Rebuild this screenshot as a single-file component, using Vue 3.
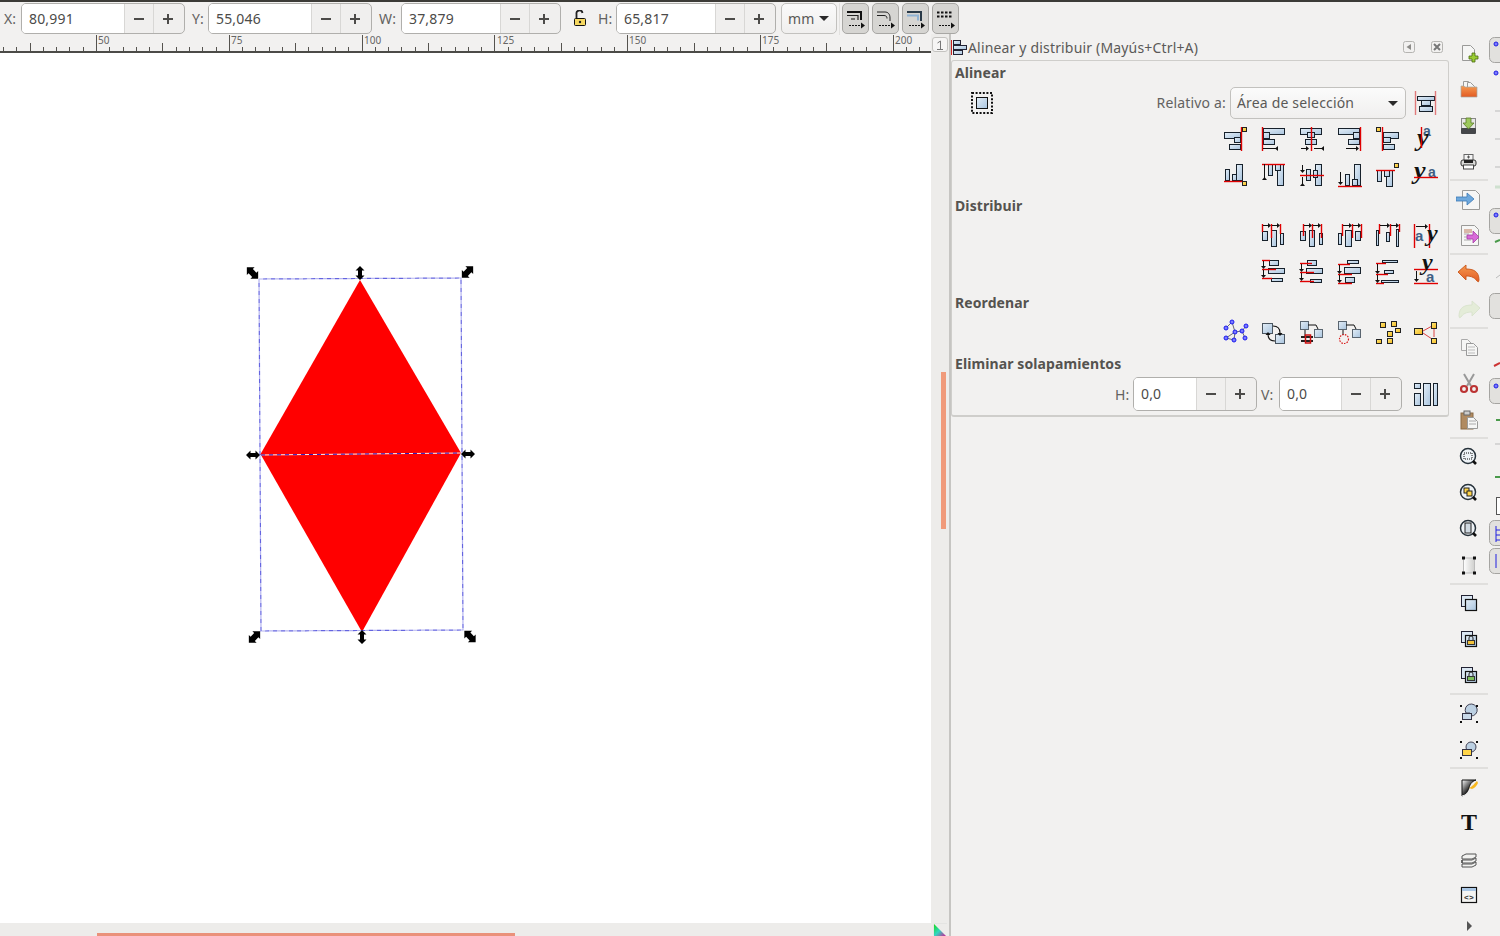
<script setup>
const B = (x, y, w, h) => `<rect x="${x + .5}" y="${y + .5}" width="${w - 1}" height="${h - 1}" fill="url(#gb)" stroke="#17212b"/>`
const V = (x, a, b, c = '#e00000') => `<path d="M${x + .5} ${a}V${b}" stroke="${c}" stroke-width="1.4" fill="none"/>`
const H = (y, a, b, c = '#e00000') => `<path d="M${a} ${y + .5}H${b}" stroke="${c}" stroke-width="1.4" fill="none"/>`
const Y = (x, y, w = 5, h = 5) => `<rect x="${x + .5}" y="${y + .5}" width="${w - 1}" height="${h - 1}" fill="url(#gy)" stroke="#222"/>`
const AR = (a, b, y) => `<path d="M${a} ${y + .5}H${b}" stroke="#111"/><path d="M${b + 1} ${y + .5}l-3 -2.5v5z" fill="#111"/>`
const AL = (a, b, y) => `<path d="M${a} ${y + .5}H${b}" stroke="#111"/><path d="M${b - 1} ${y + .5}l3 -2.5v5z" fill="#111"/>`
const AD = (x, a, b) => `<path d="M${x + .5} ${a}V${b}" stroke="#111"/><path d="M${x + .5} ${b + 1}l-2.5 -3h5z" fill="#111"/>`
const AU = (x, a, b) => `<path d="M${x + .5} ${a}V${b}" stroke="#111"/><path d="M${x + .5} ${b - 1}l-2.5 3h5z" fill="#111"/>`
const A = (x, y, s = 14) => `<text x="${x}" y="${y}" font-family="Liberation Sans" font-weight="700" font-size="${s}" fill="#3f5f85">a</text>`
const W = (x, y, s = 26) => `<text x="${x}" y="${y}" font-family="Liberation Serif" font-weight="700" font-style="italic" font-size="${s}" fill="#111">y</text>`

const alignTop = [
  B(0, 5, 17, 7) + B(10, 10, 7, 6) + B(5, 17, 12, 6) + V(17, 0, 24) + Y(18, 0),
  B(1, 1, 22, 7) + B(1, 5, 7, 7) + B(1, 12, 12, 6) + V(0, 0, 24) + AL(1, 14, 21),
  B(0, 1, 22, 7) + B(7, 5, 8, 6) + B(5, 12, 12, 6) + V(11, 0, 24) + AR(1, 8, 21) + AL(14, 22, 21),
  B(0, 1, 22, 7) + B(15, 5, 7, 7) + B(10, 12, 12, 6) + V(22, 0, 24) + AR(8, 20, 21),
  B(7, 5, 16, 7) + B(7, 10, 8, 6) + B(7, 17, 12, 6) + V(6, 0, 24) + Y(0, 0),
  A(9, 9) + W(3, 19) + V(7, 0, 21),
]
const alignBottom = [
  B(1, 6, 5, 12) + B(8, 11, 6, 7) + B(12, 1, 7, 17) + H(18, 0, 19) + Y(18, 18),
  B(6, 1, 5, 12) + B(15, 1, 7, 22) + B(13, 1, 6, 7) + H(1, 0, 23) + AU(2, 1, 15),
  B(6, 6, 5, 12) + B(15, 1, 7, 22) + B(13, 7, 5, 8) + H(12, 0, 24) + AD(2, 2, 9) + AU(2, 14, 21),
  B(7, 11, 5, 12) + B(16, 1, 7, 22) + B(14, 16, 6, 7) + H(23, 0, 24) + AD(2, 9, 21),
  B(1, 7, 5, 12) + B(10, 7, 7, 17) + B(8, 7, 6, 7) + H(7, 0, 19) + Y(18, 0),
  W(0, 16) + A(14, 14) + H(14, 0, 24),
]
const distTop = [
  B(0, 7, 6, 10) + B(9, 6, 6, 17) + B(18, 9, 4, 12) + V(0, 0, 8) + V(9, 0, 14) + V(18, 0, 10) + AR(1, 8, 1) + AR(10, 17, 1),
  B(0, 7, 6, 10) + B(9, 6, 6, 17) + B(19, 9, 4, 12) + V(3, 0, 12) + V(12, 0, 14) + V(21, 0, 14) + AR(4, 11, 1) + AR(13, 20, 1),
  B(0, 9, 4, 12) + B(7, 6, 7, 17) + B(17, 7, 6, 10) + V(4, 0, 12) + V(14, 0, 14) + V(23, 0, 14) + AR(5, 13, 1) + AR(15, 22, 1),
  B(0, 6, 3, 16) + B(10, 8, 4, 10) + B(20, 5, 3, 18) + V(3, 0, 10) + V(14, 0, 12) + V(23, 0, 8) + AR(4, 13, 1) + AR(15, 22, 1),
  V(0, 0, 24) + V(15, 0, 24) + AR(2, 13, 2) + A(1, 17, 15) + W(13, 17, 24),
]
const distBot = [
  B(7, 0, 10, 6) + B(6, 8, 17, 6) + B(9, 18, 12, 4) + H(0, 0, 8) + H(9, 0, 14) + H(18, 0, 10) + AD(1, 1, 8) + AD(1, 10, 17),
  B(7, 0, 10, 6) + B(6, 8, 17, 6) + B(10, 19, 12, 4) + H(3, 0, 12) + H(12, 0, 14) + H(21, 0, 14) + AD(1, 4, 11) + AD(1, 13, 20),
  B(9, 0, 12, 4) + B(6, 7, 17, 7) + B(7, 17, 10, 6) + H(4, 0, 12) + H(14, 0, 14) + H(23, 0, 14) + AD(1, 5, 13) + AD(1, 15, 22),
  B(6, 0, 16, 3) + B(8, 10, 10, 4) + B(5, 20, 18, 3) + H(3, 0, 10) + H(14, 0, 12) + H(23, 0, 8) + AD(1, 4, 13) + AD(1, 15, 22),
  H(9, 0, 24) + H(23, 0, 24) + AD(2, 11, 21) + W(8, 10, 24) + A(12, 22, 15),
]
const node = (x, y) => `<circle cx="${x}" cy="${y}" r="2" fill="#7a7aff" stroke="#1a1aee"/>`
const reorder = [
  `<path d="M2 7L8 1L11 11L2 17L10 19L11 11L18 10L22 5M18 10L21 17" stroke="#445" stroke-width=".8" fill="none"/>` +
    [[2, 7], [8, 1], [2, 17], [10, 19], [11, 11], [18, 10], [22, 5], [21, 17]].map(p => node(p[0], p[1])).join(''),
  `<rect x=".5" y="2.5" width="10" height="10" fill="url(#gb)" stroke="#4a5560"/><rect x="13.5" y="13.5" width="9" height="9" fill="url(#gb)" stroke="#4a5560"/>` +
    `<path d="M11 5c5 0 7 2 7 7M6 13c0 5 2 7 7 7" stroke="#111" stroke-width="1.1" fill="none"/><path d="M18 15l-2.5 -3h5zM6 11l-2.5 3h5z" fill="#111"/>`,
  `<rect x=".5" y=".5" width="8" height="8" fill="url(#gb)" stroke="#5a6570"/><rect x="14.5" y="8.5" width="8" height="8" fill="url(#gb)" stroke="#5a6570"/>` +
    `<path d="M8 4h8l2 4M5 9v6" stroke="#111" fill="none"/><path d="M1 16h12M1 20h12" stroke="#222" stroke-width="2"/><rect x="5.5" y="14" width="5" height="8" fill="none" stroke="#c11" stroke-width="1.5"/>`,
  `<rect x=".5" y=".5" width="8" height="8" fill="url(#gb)" stroke="#5a6570"/><rect x="14.5" y="8.5" width="8" height="8" fill="url(#gb)" stroke="#5a6570"/>` +
    `<path d="M8 4h8l2 4M5 9v5" stroke="#111" fill="none"/><circle cx="6" cy="18" r="4.5" fill="none" stroke="#d81818" stroke-width="1.2" stroke-dasharray="1.5 1.2"/>`,
  Y(4, 1, 6, 6) + Y(15, 0, 6, 6) + Y(19, 7, 6, 5) + Y(11, 10, 6, 6) + Y(0, 18, 6, 5) + Y(11, 17, 6, 6),
  `<path d="M9 10l9 -5M9 12l9 6M20 7v9" stroke="#d44" fill="none"/>` + Y(0, 7, 9, 7) + Y(17, 1, 6, 7) + Y(17, 17, 6, 6),
]
const overlapIcon = B(0, 1, 7, 6) + B(0, 11, 7, 13) + B(9, 1, 8, 23) + B(19, 1, 5, 23)
const relIcon = B(3, 5, 18, 5) + B(7, 9, 10, 6) + B(5, 15, 14, 6) + V(1, 0, 24, '#e07a7a') + V(21, 0, 24, '#e07a7a')
const dotIcon = `<rect x="2" y="2" width="20" height="20" fill="none" stroke="#111" stroke-width="2" stroke-dasharray="2 1.6"/><rect x="6.5" y="6.5" width="11" height="11" fill="url(#gb)" stroke="#111"/>`
const titleIcon = `<path d="M.5 3V18" stroke="#c22"/><rect x="2.5" y="3.5" width="7" height="4" fill="url(#gb)" stroke="#223"/><rect x="2.5" y="8.5" width="13" height="4" fill="url(#gb)" stroke="#223"/><rect x="2.5" y="13.5" width="9" height="4" fill="url(#gb)" stroke="#223"/>`

const page = (x, y, w, h, s = '#9a9a98') => `<path d="M${x + .5} ${y + .5}h${w - 5}l4 4v${h - 5}h-${w - 1}z" fill="#f6f6f5" stroke="${s}"/>`
const corners = (x1, y1, x2, y2, s = 3) => [[x1, y1], [x2, y1], [x1, y2], [x2, y2]].map(p => `<rect x="${p[0] - s / 2}" y="${p[1] - s / 2}" width="${s}" height="${s}" fill="#111"/>`).join('')
const lens = (c) => `<circle cx="12" cy="11" r="7.5" fill="#eef3f7" stroke="#26313a" stroke-width="1.5"/>${c}<path d="M17 16l3 3" stroke="#111" stroke-width="2.6"/>`
const sq2 = (extra = '') => `<rect x="5.5" y="4.5" width="11" height="11" fill="#dbe7f2" stroke="#223"/><rect x="9.5" y="8.5" width="11" height="11" fill="url(#gb)" stroke="#111" stroke-width="1.2"/>${extra}`
const lock = (c) => `<path d="M13 13v-2a2 2 0 0 1 4 0v2" fill="none" stroke="#222"/><rect x="11.5" y="13.5" width="7" height="4" fill="${c}" stroke="#333"/>`
const commands = [
  [page(6, 4, 13, 16) + `<path d="M17 13v3h-3v3h3v3h3v-3h3v-3h-3v-3z" fill="#9c3" stroke="#4a6a10" stroke-width=".8" transform="translate(-1 -1)"/>`,
   page(7, 4, 10, 8) + page(11, 5, 8, 8) + `<path d="M5 9h3l1 1h12v10H5z" fill="url(#go)" stroke="#a8a6a2" stroke-width=".7"/>`,
   `<rect x="5.5" y="5.5" width="14" height="10" fill="#e8e8e6" stroke="#888"/><rect x="5" y="15" width="15" height="6" rx="1" fill="#45474a"/><path d="M10 5h5v5h3l-5.500 6l-5.500 -6h3z" fill="#9cc85c" stroke="#5b7a28" stroke-width=".8"/>`,
   `<rect x="8" y="5.500" width="9" height="6" fill="#f4f4f4" stroke="#666"/><path d="M11 8h3M12.500 6.500v3" stroke="#555"/><rect x="5" y="11" width="15" height="6" rx="2" fill="#d9d9d7" stroke="#333"/><rect x="8" y="11" width="9" height="3" fill="#222"/><rect x="7.500" y="16" width="10" height="4" fill="#fff" stroke="#444"/>`],
  [page(6, 3, 18, 20) + `<path d="M3 11h11v-4l7 6l-7 6v-4H3z" transform="translate(-3 -1)" fill="#6ea8dc" stroke="#3b78b5" stroke-width=".8"/>`,
   page(5, 2, 18, 21) + `<rect x="8" y="6" width="8" height="4" fill="#d8b8a8"/><path d="M8 11h5M8 14h4M8 17h7" stroke="#aaa"/><path d="M12 14h6v-4l6 6l-6 6v-4h-6z" transform="translate(-1 -2)" fill="#d86ad8" stroke="#a43ea4" stroke-width=".8"/>`],
  [`<path d="M2 11l8 -7v4c7 0 13 2 13 11q0 3 -2 1c-2 -3 -5 -5 -11 -5v4z" fill="url(#go)" stroke="#c8561a" stroke-width=".9"/>`,
   `<path d="M24 11l-8 -7v4c-7 0 -13 2 -13 11q0 3 2 1c2 -3 5 -5 11 -5v4z" fill="#e4ecd8" stroke="#d8e2cc" stroke-width=".9"/>`],
  [page(5, 4, 11, 12, '#aaa') + page(10, 8, 12, 13, '#999') + `<path d="M12 12h7M12 15h7M12 18h7" stroke="#bbb"/>`,
   `<path d="M8 3l7 12M18 3l-7 12" stroke="#999" stroke-width="2"/><circle cx="8" cy="18" r="3" fill="none" stroke="#b33" stroke-width="2.2"/><circle cx="18" cy="18" r="3" fill="none" stroke="#b33" stroke-width="2.2"/>`,
   `<rect x="5" y="6" width="12" height="16" fill="#b08a60" stroke="#8a6a45"/><rect x="8" y="4" width="6" height="4" fill="#ccc" stroke="#666"/>` + page(11, 10, 11, 12) + `<path d="M13 14h7M13 17h7" stroke="#aaa"/>`],
  [lens(`<rect x="8" y="8" width="8" height="6" fill="none" stroke="#111" stroke-dasharray="1 1"/>`),
   lens(`<rect x="8" y="7" width="5" height="5" fill="#ffd54a" stroke="#222"/><rect x="11" y="10" width="5" height="5" fill="#ffd54a" stroke="#222"/>`),
   lens(`<rect x="9" y="6" width="6" height="10" fill="#cfd9e2" stroke="#222"/>`),
   `<rect x="7.500" y="5" width="11" height="15" fill="url(#gw)" stroke="#bbb"/>` + corners(7.500, 5, 18.500, 20)],
  [sq2(), sq2(lock('#f2c23a')), sq2(lock('#7cc05a'))],
  [`<path d="M10 12a6 6 0 1 1 5 3l-1 -3z" fill="#bcd0e2" stroke="#445"/><rect x="6.500" y="12.500" width="9" height="6" fill="#c8d8e8" stroke="#334"/>` + corners(5, 5, 21, 21, 2),
   `<circle cx="15" cy="10" r="5" fill="#bcd0e2" stroke="#445"/><rect x="6.500" y="12.500" width="9" height="6" fill="#ffd54a" stroke="#334"/>` + corners(5, 5, 21, 21, 2)],
  [`<path d="M6 5h14c-3 1 -6 3 -7 8c-2 5 -4 7 -7 8z" fill="url(#gk)" stroke="#111"/><path d="M13 13c3 -1 6 -5 8 -7l1 2c-1 2 -3 5 -6 6z" fill="#f8b820"/><path d="M6 21c4 -1 8 -3 10 -7" stroke="#eee" fill="none"/>`,
   `<text x="13" y="19" text-anchor="middle" font-family="Liberation Serif" font-weight="700" font-size="24" fill="#111">T</text>`,
   `<path d="M6 9l4 -2h10v3l-4 2H6zM6 13l0 3l0 -3h10l4 -2v3l-4 2H6zM6 17h10l4 -2v3l-4 2H6z" fill="#f2f2f0" stroke="#555"/>`,
   `<rect x="5.500" y="4.500" width="15" height="15" fill="#f4f4f2" stroke="#111" stroke-width="1.200"/><rect x="6" y="5" width="14" height="3" fill="#a9c6e4"/><text x="13" y="17" text-anchor="middle" font-family="Liberation Mono" font-weight="700" font-size="8" fill="#333">&lt;&gt;</text>`],
]
const sepAfter = commands.length

const ticks = []
for (let i = -7; i < 63; i++) {
  const x = Math.round(96 + i * 13.28) + .5
  const k = ((i % 10) + 10) % 10
  ticks.push({ x, y: k === 0 ? 1 : k === 5 ? 9 : 13 })
}
const labels = [['50', 96], ['75', 229], ['100', 362], ['125', 495], ['150', 627], ['175', 760], ['200', 893]]

const hArrow = 'M-7 0L-2.500 -4.500V-2H2.500V-4.500L7 0L2.500 4.500V2H-2.500V4.500Z'
const dArrow = 'M-8 0L-2.500 -5.500V-3H2.500V-5.500L8 0L2.500 5.500V3H-2.500V5.500Z'
const handles = [
  { x: 252.5, y: 273, r: 45, d: dArrow },
  { x: 360, y: 273, r: 90, d: hArrow },
  { x: 467.5, y: 272, r: -45, d: dArrow },
  { x: 253, y: 455, r: 0, d: hArrow },
  { x: 468, y: 454, r: 0, d: hArrow },
  { x: 254.5, y: 637, r: -45, d: dArrow },
  { x: 362, y: 637, r: 90, d: hArrow },
  { x: 470, y: 636.500, r: 45, d: dArrow },
]
const arrow = `<path d="M4 17.500H16" stroke="#111" stroke-dasharray="2 1"/><path d="M20 17.500l-4 -3v6z" fill="#111"/>`
const toggles = [
  `<path d="M2 4H16V12" stroke="#111" stroke-width="2" fill="none"/><path d="M2 7.500H13V12" stroke="#222" stroke-width="1.200" fill="none"/><path d="M6 11H10" stroke="#111"/>` + arrow,
  `<path d="M2 4h8c3 0 5 2 5 6v3M2 7.500h7c2 0 3 1 3 3" stroke="#222" fill="none"/>` + arrow,
  `<path d="M2 4h14v9" stroke="#2a3a48" stroke-width="2" fill="none"/><path d="M2 7.500h11v5" stroke="#8fb3d4" stroke-width="2" fill="none"/>` + arrow,
  `<path d="M2 4.500H18M2 8.500H18" stroke="#111" stroke-width="2" stroke-dasharray="2.500 1.500"/>` + arrow,
]
</script>

<template>
  <div class="app">
    <svg class="defs" width="0" height="0" aria-hidden="true">
      <defs>
        <linearGradient id="gb" x1="0" y1="0" x2="1" y2="1"><stop offset="0" stop-color="#e4eef7"/><stop offset="1" stop-color="#a9c4de"/></linearGradient>
        <linearGradient id="gy" x1="0" y1="0" x2="1" y2="1"><stop offset="0" stop-color="#ffe97a"/><stop offset="1" stop-color="#f5b81e"/></linearGradient>
        <linearGradient id="go" x1="0" y1="0" x2="0" y2="1"><stop offset="0" stop-color="#f59a50"/><stop offset="1" stop-color="#e25a22"/></linearGradient>
        <linearGradient id="gw" x1="0" y1="0" x2="1" y2="0"><stop offset="0" stop-color="#fff"/><stop offset="1" stop-color="#cfcfcd"/></linearGradient>
        <linearGradient id="gk" x1="0" y1="0" x2="1" y2="1"><stop offset="0" stop-color="#ffffff"/><stop offset=".55" stop-color="#222"/><stop offset="1" stop-color="#000"/></linearGradient>
        <linearGradient id="gt" x1="0" y1="0" x2="1" y2="1"><stop offset="0" stop-color="#18d818"/><stop offset=".5" stop-color="#30d8c0"/><stop offset="1" stop-color="#d01898"/></linearGradient>
      </defs>
    </svg>

    <div class="topline"></div>

    <header class="toolbar">
      <span class="lbl l-x">X:</span>
      <div class="spin s-164"><span class="val">80,991</span><span class="btn minus"></span><span class="btn plus"></span></div>
      <span class="lbl l-y">Y:</span>
      <div class="spin s-164"><span class="val">55,046</span><span class="btn minus"></span><span class="btn plus"></span></div>
      <span class="lbl l-w">W:</span>
      <div class="spin s-160"><span class="val">37,879</span><span class="btn minus"></span><span class="btn plus"></span></div>
      <svg class="lock" width="14" height="17" viewBox="0 0 14 17">
        <path d="M3.500 8V4a3 3 0 0 1 6 -1" fill="none" stroke="#222" stroke-width="1.800"/>
        <rect x="1.500" y="8.500" width="11" height="7" rx="1" fill="#f6d860" stroke="#111"/>
        <circle cx="7" cy="12" r="1.200" fill="#222"/>
      </svg>
      <span class="lbl l-h">H:</span>
      <div class="spin s-160"><span class="val">65,817</span><span class="btn minus"></span><span class="btn plus"></span></div>
      <div class="unit"><span>mm</span><i class="caret"></i></div>
      <i class="tsep"></i>
      <div class="toggles">
        <div v-for="(t, i) in toggles" :key="i" class="toggle">
          <svg width="22" height="22" viewBox="0 0 22 22" v-html="t"></svg>
        </div>
      </div>
    </header>

    <main class="main">
      <section class="workspace">
        <svg class="ruler" width="931" height="19" viewBox="0 0 931 19">
          <path v-for="t in ticks" :key="t.x" :d="`M${t.x} ${t.y}V18`" stroke="#55534f" fill="none"/>
          <rect x="0" y="17" width="931" height="2" fill="#4c4b48"/>
          <text v-for="l in labels" :key="l[0]" :x="l[1] + 2" y="10" class="rtext">{{ l[0] }}</text>
        </svg>
        <div class="vscroll">
          <div class="corner">
            <svg width="12" height="12" viewBox="0 0 12 12"><path d="M3.500 4l3 -2v8M3 10.500h6" fill="none" stroke="#777"/></svg>
          </div>
          <div class="vthumb"></div>
        </div>
        <div class="canvas">
          <svg width="931" height="870" viewBox="0 53 931 870">
            <polygon points="360,280 260,455 461,453" fill="#ff0000"/>
            <polygon points="261,455 461,453 362,632" fill="#ff0000"/>
            <polygon class="dash-l" points="259,279 461,278 463,630 261,631"/>
            <polygon class="dash-d" points="259,279 461,278 463,630 261,631"/>
            <path d="M261 455L461 453" stroke="#ffe8e8" fill="none"/>
            <path d="M261 455L461 453" stroke="#2a10b8" stroke-dasharray="4 4" fill="none"/>
            <path v-for="(h, i) in handles" :key="i" :d="h.d" :transform="`translate(${h.x} ${h.y}) rotate(${h.r})`" fill="#000"/>
          </svg>
        </div>
        <div class="hscroll"><div class="hthumb"></div></div>
        <div class="swatch">
          <svg width="16" height="13" viewBox="0 0 16 13">
            <path d="M.500 12.500V1.500a1 1 0 0 1 1 -1H14" fill="none" stroke="#e4e4e2"/>
            <polygon points="1,1 1,13 13,13" fill="url(#gt)"/>
          </svg>
        </div>
      </section>

      <aside class="panel">
        <div class="ptitle">
          <svg width="16" height="20" viewBox="0 0 16 20" v-html="titleIcon"></svg>
          <span class="ptext">Alinear y distribuir (Mayús+Ctrl+A)</span>
          <span class="pbtn"><svg width="12" height="12" viewBox="0 0 12 12"><rect x=".500" y=".500" width="11" height="11" rx="2" fill="none" stroke="#b5b4b1"/><path d="M8 3v6L3.500 6z" fill="#8c8b88"/></svg></span>
          <span class="pbtn p2"><svg width="12" height="12" viewBox="0 0 12 12"><rect x=".500" y=".500" width="11" height="11" rx="2" fill="none" stroke="#b5b4b1"/><path d="M3 3l6 6M9 3l-6 6" stroke="#777" stroke-width="2"/></svg></span>
        </div>
        <div class="frame">
          <h3 class="head">Alinear</h3>
          <div class="rel">
            <svg class="dot" width="24" height="24" viewBox="0 0 24 24" v-html="dotIcon"></svg>
            <span class="lbl rel-l">Relativo a:</span>
            <div class="combo"><span>Área de selección</span><i class="caret"></i></div>
            <svg width="24" height="24" viewBox="0 0 24 24" v-html="relIcon"></svg>
          </div>
          <div class="irow mt8">
            <svg v-for="(s, i) in alignTop" :key="i" width="24" height="24" viewBox="0 0 24 24" v-html="s"></svg>
          </div>
          <div class="irow mt12">
            <svg v-for="(s, i) in alignBottom" :key="i" width="24" height="24" viewBox="0 0 24 24" v-html="s"></svg>
          </div>

          <h3 class="head sec">Distribuir</h3>
          <div class="irow mt8">
            <svg v-for="(s, i) in distTop" :key="i" width="24" height="24" viewBox="0 0 24 24" v-html="s"></svg>
          </div>
          <div class="irow mt12">
            <svg v-for="(s, i) in distBot" :key="i" width="24" height="24" viewBox="0 0 24 24" v-html="s"></svg>
          </div>

          <h3 class="head sec">Reordenar</h3>
          <div class="irow mt8">
            <svg v-for="(s, i) in reorder" :key="i" width="24" height="24" viewBox="0 0 24 24" v-html="s"></svg>
          </div>

          <h3 class="head sec">Eliminar solapamientos</h3>
          <div class="over">
            <span class="lbl">H:</span>
            <div class="spin s-124"><span class="val">0,0</span><span class="btn minus"></span><span class="btn plus"></span></div>
            <span class="lbl">V:</span>
            <div class="spin s-124 s-123"><span class="val">0,0</span><span class="btn minus"></span><span class="btn plus"></span></div>
            <svg class="ov-i" width="24" height="24" viewBox="0 0 24 24" v-html="overlapIcon"></svg>
          </div>
        </div>
      </aside>

      <nav class="commands">
        <template v-for="(group, g) in commands" :key="g">
          <svg v-for="(s, i) in group" :key="i" class="cmd" width="26" height="36" viewBox="0 -6 26 36" v-html="s"></svg>
          <i v-if="g < sepAfter - 1" class="csep"></i>
        </template>
        <i class="more"></i>
      </nav>

      <svg class="snap" width="12" height="902" viewBox="0 34 12 902">
        <g fill="#e2e1de" stroke="#a5a4a1">
          <rect x="1.500" y="37.500" width="20" height="25" rx="5"/>
          <rect x="1.500" y="208.500" width="20" height="25" rx="5"/>
          <rect x="1.500" y="293.500" width="20" height="25" rx="5"/>
          <rect x="1.500" y="378.500" width="20" height="25" rx="5"/>
          <rect x="1.500" y="520.500" width="20" height="25" rx="5"/>
          <rect x="1.500" y="548.500" width="20" height="25" rx="5"/>
        </g>
        <g fill="#7a7aff" stroke="#2020e0">
          <circle cx="8" cy="44" r="2"/><circle cx="8" cy="73" r="2"/><circle cx="8" cy="215" r="2"/><circle cx="8" cy="386" r="2"/>
        </g>
        <g stroke="#bbb" fill="none">
          <path d="M7 111h5M7 139h5M7 167h5M8 278l4 -3M7 444h5"/>
        </g>
        <path d="M7 187h5" stroke="#cfe0cf" stroke-width="3"/>
        <path d="M7 242l5 -2M8 420h4M7 477h5" stroke="#4a9a4a" stroke-width="2"/>
        <path d="M6 366l6 -3" stroke="#c33" stroke-width="2"/>
        <rect x="8.500" y="497.500" width="5" height="17" fill="#fff" stroke="#555"/>
        <path d="M8 526v16M8 530h4M8 535h4M8 540h4M8 554v14" stroke="#2020e0" fill="none"/>
      </svg>
    </main>
  </div>
</template>

<style>
html, body { margin: 0; padding: 0; background: #f2f1f0; overflow: hidden; }
</style>

<style scoped>
.app {
  width: 1500px; height: 936px; overflow: hidden; display: flex; flex-direction: column;
  position: relative; background: #f2f1f0; color: #55534f;
  font-family: "Noto Sans", "Open Sans", sans-serif; font-size: 14px; letter-spacing: .17px;
}
.defs { display: block; height: 0; }
.topline { height: 2px; background: #3c3b37; flex: none; }

.toolbar { height: 32px; flex: none; display: flex; align-items: flex-start; padding: 1px 0 0 4px; box-sizing: border-box; }
.lbl { line-height: 31px; color: #636260; display: block; }
.l-x { width: 17px; }
.l-y { width: 16px; margin-left: 7px; }
.l-w { width: 22px; margin-left: 7px; }
.l-h { width: 18px; margin-left: 11px; }
.lock { margin: 7px 0 0 12px; flex: none; }

.spin {
  display: flex; box-sizing: border-box; height: 31px; border: 1px solid #b0afac; border-radius: 5px;
  overflow: hidden; background: #f0efee; flex: none;
}
.s-164 { width: 164px; }
.s-160 { width: 160px; }
.s-124 { width: 124px; height: 34px; }
.s-123 { width: 123px; }
.val { flex: 1; background: #fff; padding-left: 7px; line-height: 29px; color: #4c4b49; }
.s-124 .val { line-height: 32px; }
.btn { width: 29px; box-sizing: border-box; flex: none; border-left: 1px solid #d8d7d5; position: relative; }
.btn.plus { width: 31px; }
.btn::before { content: ""; position: absolute; left: 9px; top: 50%; width: 10px; height: 2px; margin-top: -1px; background: #4c4b49; }
.plus::after { content: ""; position: absolute; left: 13px; top: 50%; width: 2px; height: 10px; margin-top: -5px; background: #4c4b49; }

.unit {
  width: 56px; height: 31px; margin-left: 5px; box-sizing: border-box; border: 1px solid #c2c1be; border-radius: 5px;
  display: flex; align-items: center; justify-content: space-between; padding: 0 7px 0 6px; flex: none;
  background: linear-gradient(#fafafa, #f0efee); color: #5a5957;
}
.caret { width: 0; height: 0; border-left: 5px solid transparent; border-right: 5px solid transparent; border-top: 5px solid #2a2a2a; }
.tsep { width: 1px; height: 32px; background: #e2e1df; margin: 0 2px 0 2px; flex: none; }
.toggles { display: flex; gap: 3px; }
.toggle {
  width: 27px; height: 31px; box-sizing: border-box; border: 1px solid #a8a7a4; border-radius: 5px; background: #d6d5d2;
  display: flex; align-items: center; justify-content: center;
}

.main { flex: 1; display: flex; min-height: 0; }
.workspace {
  width: 949px; flex: none; display: grid; grid-template-columns: 931px 18px; grid-template-rows: 19px 870px 13px;
  position: relative; border-right: 2px solid #c6c5c2;
}
.ruler { display: block; grid-column: 1; grid-row: 1; }
.rtext { font-family: "Noto Sans", sans-serif; font-size: 10px; fill: #666; letter-spacing: 0; }
.vscroll { grid-column: 2; grid-row: 1 / 4; background: #edecea; display: flex; flex-direction: column; }
.corner {
  width: 16px; height: 15px; margin: 3px 0 0 1px; box-sizing: border-box; border: 1px solid #c4c3c0; border-radius: 3px;
  display: flex; align-items: center; justify-content: center; background: #f6f5f4;
}
.vthumb { width: 5px; height: 157px; margin: 320px 0 0 10px; background: #f09a7a; }
.canvas { grid-column: 1; grid-row: 2; background: #fff; overflow: hidden; }
.canvas svg { display: block; }
.dash-l { fill: none; stroke: #b4b4f0; stroke-width: 1.2; stroke-dasharray: 4 4; }
.dash-d { fill: none; stroke: #6464e0; stroke-width: 1.2; stroke-dasharray: 4 4; stroke-dashoffset: 4; }
.hscroll { grid-column: 1; grid-row: 3; background: #edecea; display: flex; align-items: flex-end; }
.hthumb { width: 418px; height: 3px; margin-left: 97px; background: #ea917a; }
.swatch { position: absolute; left: 933px; bottom: 0; line-height: 0; }

.panel { width: 499px; flex: none; display: flex; flex-direction: column; }
.ptitle { height: 26px; flex: none; display: flex; align-items: center; }
.ptext { margin-left: 1px; flex: 1; color: #5a5957; white-space: nowrap; }
.pbtn { display: flex; margin-right: 16px; }
.pbtn.p2 { margin-right: 7px; }
.frame {
  width: 498px; height: 357px; box-sizing: border-box; padding: 0 10px 0 3px;
  border: 1px solid #cfcecb; border-bottom-width: 2px; border-radius: 3px;
}
.head { margin: 0; height: 22px; line-height: 24px; font-size: 14px; font-weight: 700; color: #55534f; letter-spacing: .1px; }
.sec { margin-top: 7px; }
.rel { display: flex; align-items: center; height: 32px; margin-top: 4px; }
.dot { margin-left: 15px; }
.rel-l { margin-left: auto; margin-right: 4px; line-height: 31px; height: 32px; }
.combo {
  width: 176px; height: 32px; box-sizing: border-box; border: 1px solid #c2c1be; border-radius: 5px;
  background: linear-gradient(#fbfbfb, #f0efee); display: flex; align-items: center; justify-content: space-between;
  padding: 0 7px 0 6px; margin-right: 8px; color: #5a5957;
}
.combo span { line-height: 29px; height: 30px; }
.irow { display: flex; justify-content: flex-end; gap: 14px; height: 24px; }
.irow svg, .ov-i { flex: none; overflow: visible; }
.mt8 { margin-top: 8px; }
.mt12 { margin-top: 12px; }
.over { display: flex; align-items: center; justify-content: flex-end; height: 34px; margin-top: 3px; }
.over .lbl { width: 14px; margin-right: 4px; margin-left: 4px; flex: none; }
.ov-i { margin-left: 12px; }

.commands { width: 38px; flex: none; display: flex; flex-direction: column; align-items: center; padding-top: 1px; }
.cmd { flex: none; display: block; }
.csep { display: block; width: 38px; height: 2px; background: #e0dfdd; flex: none; }
.more { display: block; margin-top: 8px; width: 0; height: 0; border-top: 5px solid transparent; border-bottom: 5px solid transparent; border-left: 5px solid #555; }
.snap { display: block; flex: none; }
</style>
